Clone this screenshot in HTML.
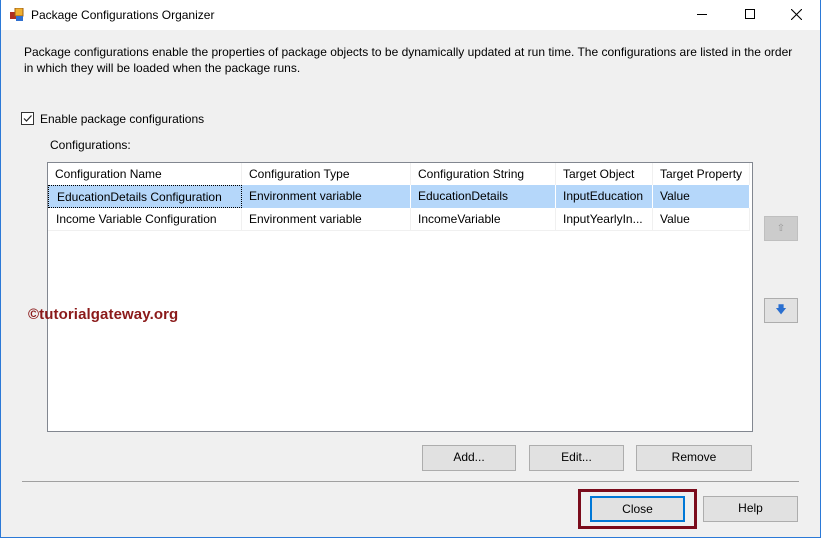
<!DOCTYPE html>
<html><head><style>
*{margin:0;padding:0;box-sizing:border-box}
body{width:821px;height:538px;position:relative;background:#f0f0f0;font-family:"Liberation Sans",sans-serif;font-size:12px;color:#000;overflow:hidden}
.a{position:absolute;white-space:nowrap}
.btn{position:absolute;background:#e1e1e1;border:1px solid #adadad;text-align:center;line-height:23px}
.cell{position:absolute;height:22px;line-height:22px;padding-left:7px;border-right:1px solid #f0f0f0}
</style></head><body>
<div class="a" style="left:0;top:0;width:821px;height:30px;background:#fff"></div>
<div class="a" style="left:0;top:0;width:1px;height:538px;background:#2b79d7"></div>
<div class="a" style="right:0;top:0;width:1px;height:538px;background:#2b79d7"></div>
<div class="a" style="left:0;bottom:0;width:821px;height:1px;background:#2b79d7"></div>
<svg class="a" style="left:10px;top:8px" width="14" height="14"><rect x="0" y="4" width="7" height="7" fill="#b03020"/><rect x="5" y="0" width="8" height="8" fill="#f0b030" stroke="#a06010"/><rect x="6" y="8" width="7" height="5" fill="#3070d0"/></svg>
<div class="a" style="left:31px;top:8px;font-size:12px">Package Configurations Organizer</div>
<div class="a" style="left:697px;top:14px;width:10px;height:1px;background:#000"></div>
<div class="a" style="left:745px;top:9px;width:10px;height:10px;border:1px solid #000"></div>
<svg class="a" style="left:791px;top:9px" width="11" height="11"><path d="M0 0L11 11M11 0L0 11" stroke="#000" stroke-width="1.1"/></svg>
<div class="a" style="left:24px;top:44px;line-height:16px">Package configurations enable the properties of package objects to be dynamically updated at run time. The configurations are listed in the order<br>in which they will be loaded when the package runs.</div>
<div class="a" style="left:21px;top:112px;width:13px;height:13px;border:1px solid #333;background:#fff"></div>
<svg class="a" style="left:22px;top:113px" width="11" height="11"><path d="M2 5.5 L4.5 8 L9.5 2.5" stroke="#222" stroke-width="1.2" fill="none"/></svg>
<div class="a" style="left:40px;top:112px">Enable package configurations</div>
<div class="a" style="left:50px;top:138px">Configurations:</div>
<div class="a" style="left:47px;top:162px;width:706px;height:270px;background:#fff;border:1px solid #828790"></div>
<div class="cell" style="left:48px;top:163px;width:194px;">Configuration Name</div>
<div class="cell" style="left:242px;top:163px;width:169px;">Configuration Type</div>
<div class="cell" style="left:411px;top:163px;width:145px;">Configuration String</div>
<div class="cell" style="left:556px;top:163px;width:97px;">Target Object</div>
<div class="cell" style="left:653px;top:163px;width:97px;">Target Property</div>
<div class="a" style="left:48px;top:185px;width:702px;height:23px;background:#b5d7fa"></div>
<div class="cell" style="left:48px;top:185px;width:194px;border:1px dotted #000;height:23px;padding-left:8px">EducationDetails Configuration</div>
<div class="cell" style="left:242px;top:185px;width:169px;height:23px;border-color:#fff">Environment variable</div>
<div class="cell" style="left:411px;top:185px;width:145px;height:23px;border-color:#fff">EducationDetails</div>
<div class="cell" style="left:556px;top:185px;width:97px;height:23px;border-color:#fff">InputEducation</div>
<div class="cell" style="left:653px;top:185px;width:97px;height:23px;border-color:#fff">Value</div>
<div class="cell" style="left:48px;top:208px;width:194px;padding-left:8px">Income Variable Configuration</div>
<div class="cell" style="left:242px;top:208px;width:169px;">Environment variable</div>
<div class="cell" style="left:411px;top:208px;width:145px;">IncomeVariable</div>
<div class="cell" style="left:556px;top:208px;width:97px;">InputYearlyIn...</div>
<div class="cell" style="left:653px;top:208px;width:97px;">Value</div>
<div class="a" style="left:48px;top:230px;width:702px;height:1px;background:#f0f0f0"></div>
<div class="a" style="left:28px;top:306px;font-size:15px;letter-spacing:0.1px;font-weight:bold;color:#8b1a1a">©tutorialgateway.org</div>
<div class="btn" style="left:764px;top:216px;width:34px;height:25px;background:#cccccc;border-color:#bfbfbf;color:#999;font-size:10px">⇧</div>
<div class="btn" style="left:764px;top:298px;width:34px;height:25px;color:#2a6fd0;font-size:11px">🡇</div>
<div class="btn" style="left:422px;top:445px;width:94px;height:26px">Add...</div>
<div class="btn" style="left:529px;top:445px;width:95px;height:26px">Edit...</div>
<div class="btn" style="left:636px;top:445px;width:116px;height:26px">Remove</div>
<div class="a" style="left:22px;top:481px;width:777px;height:1px;background:#a0a0a0"></div>
<div class="a" style="left:578px;top:489px;width:119px;height:40px;border:3px solid #7b0c1c"></div>
<div class="btn" style="left:590px;top:496px;width:95px;height:26px;border:2px solid #0078d7;line-height:22px">Close</div>
<div class="btn" style="left:703px;top:496px;width:95px;height:26px">Help</div>
</body></html>
